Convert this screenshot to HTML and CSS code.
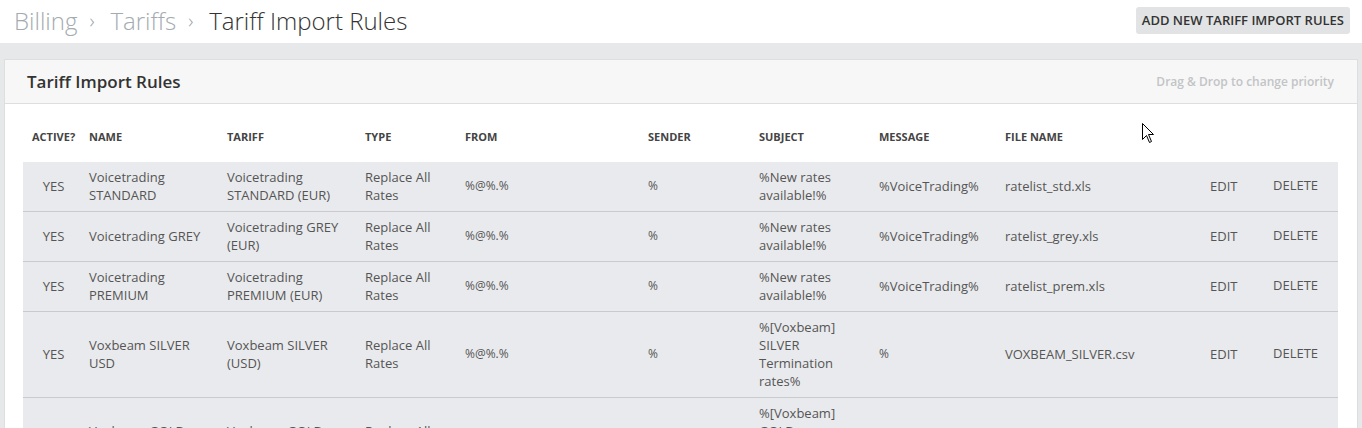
FILE: index.html
```html
<!DOCTYPE html>
<html lang="en">

<head>
	<meta charset="UTF-8" />
	<title>Tariff Import Rules</title>
	<link rel="stylesheet" href="styles.css">
</head>

<body>
	<header class="top-bar">
		<div class="breadcrumb">
			<span class="crumb">Billing</span>
			<span class="crumb-sep">›</span>
			<span class="crumb">Tariffs</span>
			<span class="crumb-sep">›</span>
			<span class="crumb current">Tariff Import Rules</span>
		</div>
		<button class="add-btn">ADD NEW TARIFF IMPORT RULES</button>
	</header>

	<main class="content">
		<section class="panel">
			<div class="panel-head">
				<h2>Tariff Import Rules</h2>
				<span class="panel-hint">Drag &amp; Drop to change priority</span>
			</div>
			<div class="panel-body">
				<table class="rules">
					<colgroup>
						<col style="width:57px">
						<col style="width:138px">
						<col style="width:138px">
						<col style="width:100px">
						<col style="width:183px">
						<col style="width:111px">
						<col style="width:120px">
						<col style="width:126px">
						<col style="width:205px">
						<col style="width:63px">
						<col style="width:74px">
					</colgroup>
					<thead>
						<tr>
							<th>Active?</th>
							<th>Name</th>
							<th>Tariff</th>
							<th>Type</th>
							<th>From</th>
							<th>Sender</th>
							<th>Subject</th>
							<th>Message</th>
							<th>File name</th>
							<th></th>
							<th></th>
						</tr>
					</thead>
					<tbody>
						<tr>
							<td class="yes">YES</td>
							<td>Voicetrading STANDARD</td>
							<td>Voicetrading STANDARD (EUR)</td>
							<td>Replace All Rates</td>
							<td class="pat">%@%.%</td>
							<td class="pat">%</td>
							<td>%New rates available!%</td>
							<td>%VoiceTrading%</td>
							<td>ratelist_std.xls</td>
							<td class="act">EDIT</td>
							<td class="act del">DELETE</td>
						</tr>
						<tr>
							<td class="yes">YES</td>
							<td>Voicetrading GREY</td>
							<td>Voicetrading GREY (EUR)</td>
							<td>Replace All Rates</td>
							<td class="pat">%@%.%</td>
							<td class="pat">%</td>
							<td>%New rates available!%</td>
							<td>%VoiceTrading%</td>
							<td>ratelist_grey.xls</td>
							<td class="act">EDIT</td>
							<td class="act del">DELETE</td>
						</tr>
						<tr>
							<td class="yes">YES</td>
							<td>Voicetrading PREMIUM</td>
							<td>Voicetrading PREMIUM (EUR)</td>
							<td>Replace All Rates</td>
							<td class="pat">%@%.%</td>
							<td class="pat">%</td>
							<td>%New rates available!%</td>
							<td>%VoiceTrading%</td>
							<td>ratelist_prem.xls</td>
							<td class="act">EDIT</td>
							<td class="act del">DELETE</td>
						</tr>
						<tr>
							<td class="yes">YES</td>
							<td>Voxbeam SILVER USD</td>
							<td>Voxbeam SILVER (USD)</td>
							<td>Replace All Rates</td>
							<td class="pat">%@%.%</td>
							<td class="pat">%</td>
							<td>%[Voxbeam] SILVER Termination rates%</td>
							<td class="pat">%</td>
							<td>VOXBEAM_SILVER.csv</td>
							<td class="act">EDIT</td>
							<td class="act del">DELETE</td>
						</tr>
						<tr>
							<td class="yes">YES</td>
							<td>Voxbeam GOLD USD</td>
							<td>Voxbeam GOLD (USD)</td>
							<td>Replace All Rates</td>
							<td class="pat">%@%.%</td>
							<td class="pat">%</td>
							<td>%[Voxbeam] GOLD Termination rates%</td>
							<td class="pat">%</td>
							<td>VOXBEAM_GOLD.csv</td>
							<td class="act">EDIT</td>
							<td class="act del">DELETE</td>
						</tr>
					</tbody>
				</table>
			</div>
		</section>
	</main>

	<svg class="cursor" width="13" height="21" viewBox="0 0 13 21">
		<path d="M0.5 0.5 L0.5 16.5 L4.5 12.5 L7.5 19.5 L9.5 18.5 L6.5 11.5 L11.5 11.5 Z" fill="#fff" stroke="#000" stroke-width="1" stroke-linejoin="miter" />
	</svg>
</body>

</html>
```

FILE: styles.css
```css
body {
	font-family: "Open Sans", "Liberation Sans", sans-serif;
	background-color: #e6e8e9;
	color: #555;
	margin: 0;
	padding: 0;
}

.top-bar {
	height: 43px;
	background-color: #fff;
	display: flex;
	justify-content: space-between;
	align-items: center;
	padding: 0 12px 0 14px;
}

.breadcrumb {
	font-size: 24px;
	font-weight: 300;
	color: #a3abb0;
	display: flex;
	align-items: center;
	margin-top: -2px;
}

.crumb-sep {
	font-size: 20px;
	color: #9aa2a7;
	margin: 0 16px 0 12px;
}

.crumb.current {
	color: #333;
}

.add-btn {
	font-family: inherit;
	font-size: 13px;
	font-weight: 600;
	color: #333;
	background-color: #e1e3e4;
	border: none;
	border-radius: 3px;
	height: 27px;
	padding: 0 6px;
	margin-top: -3px;
}

.content {
	padding: 16px 4px;
}

.panel {
	background-color: #fff;
	border: 1px solid #dcdedf;
}

.panel-head {
	height: 43px;
	background-color: #f7f7f7;
	border-bottom: 1px solid #dcdedf;
	display: flex;
	justify-content: space-between;
	align-items: center;
	padding: 0 23px 0 22px;
}

.panel-head h2 {
	margin: 0;
	font-size: 17px;
	font-weight: 600;
	color: #333;
}

.panel-hint {
	font-size: 12px;
	font-weight: 600;
	color: #c2c4c6;
}

.panel-body {
	padding: 20px 19px 20px 18px;
}

.rules {
	width: 1315px;
	table-layout: fixed;
	border-collapse: collapse;
	font-size: 13px;
}

.rules th {
	text-align: left;
	font-size: 11px;
	font-weight: 700;
	color: #444;
	text-transform: uppercase;
	line-height: 15px;
	padding: 5px 9px 18px;
}

.rules td {
	background-color: #e9eaed;
	border-bottom: 1px solid #c9cacc;
	line-height: 18px;
	padding: 6px 9px 7px;
	vertical-align: middle;
	color: #555;
}

.rules td.yes {
	text-align: center;
	padding-left: 13px;
}

.rules td.pat {
	font-size: 12px;
}

.rules td.del {
	padding-bottom: 9px;
}

.cursor {
	position: absolute;
	left: 1142px;
	top: 123px;
}
```
